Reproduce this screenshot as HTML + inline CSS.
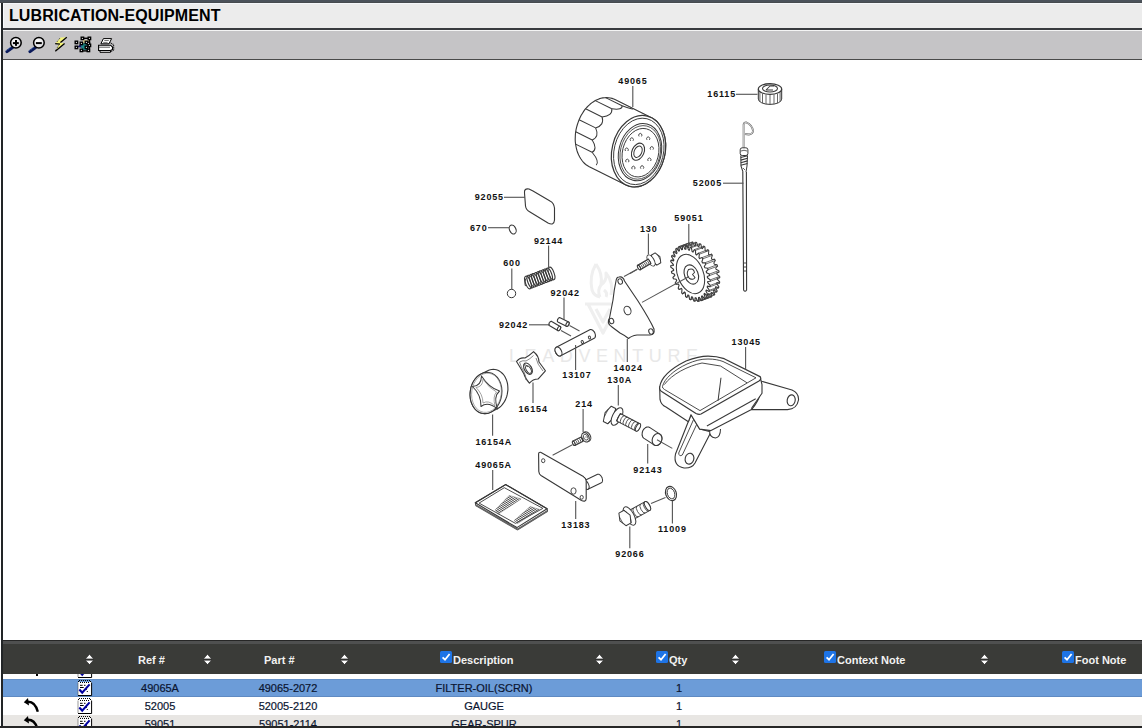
<!DOCTYPE html>
<html><head><meta charset="utf-8">
<style>
*{margin:0;padding:0;box-sizing:border-box}
html,body{width:1142px;height:728px;overflow:hidden;background:#fff;font-family:"Liberation Sans",sans-serif;position:relative}
.abs{position:absolute}
#topbar{left:0;top:0;width:1142px;height:3px;background:linear-gradient(#4b525a 0,#4b525a 2px,#474b4f 2px)}
#lborder{left:1px;top:3px;width:2px;height:725px;background:#222527}
#title{left:3px;top:3px;width:1139px;height:25px;background:#ececec;border-top:1px solid #f5f7fa;border-left:1px solid #f8f9fb}
#title span{position:absolute;left:5px;top:3px;font-size:16px;font-weight:bold;color:#000;letter-spacing:0.1px}
#tline{left:3px;top:28px;width:1139px;height:2px;background:#393b3f}
#twhite{left:3px;top:30px;width:1139px;height:1px;background:#f4f4f4}
#toolbar{left:3px;top:31px;width:1139px;height:28px;background:#c5c4c6}
#bline{left:3px;top:59px;width:1139px;height:1px;background:#4a4a4a}
#thead{left:3px;top:640px;width:1139px;height:34px;background:#3a3b38}
#thead .l1{position:absolute;left:0;top:0;width:100%;height:1px;background:#262626}
#thead .l2{position:absolute;left:0;top:1px;width:100%;height:3px;background:#4f5050}
.th{position:absolute;top:653.5px;font-size:11px;font-weight:bold;color:#f2f2f2;white-space:nowrap}
.sort{position:absolute;top:655px;width:8px;height:10px}
.row{left:3px;width:1139px;height:18px}
.td{position:absolute;font-size:11px;color:#0b1530;-webkit-text-stroke:0.2px #0b1530;white-space:nowrap}
#bottom{left:0;top:726px;width:1142px;height:2px;background:#262626}
.cb{position:absolute;top:651px;width:12px;height:12px;background:#1a73e8;border-radius:2px}
#diag{position:absolute;left:0;top:0}
.lb{font-family:"Liberation Sans",sans-serif;font-size:9px;font-weight:bold;letter-spacing:0.85px;fill:#111}
</style></head><body>
<div class="abs" id="title"><span>LUBRICATION-EQUIPMENT</span></div>
<div class="abs" id="tline"></div>
<div class="abs" id="twhite"></div>
<div class="abs" id="toolbar"></div>
<div class="abs" id="bline"></div>
<svg class="abs" style="left:0;top:31px" width="130" height="28" viewBox="0 31 130 28">
<defs><radialGradient id="lens" cx="0.4" cy="0.35" r="0.7"><stop offset="0" stop-color="#fff"/><stop offset="1" stop-color="#d8d8dc"/></radialGradient></defs>
<g>
<line x1="7" y1="51.5" x2="12.5" y2="47.5" stroke="#0a1a5a" stroke-width="3.2" stroke-linecap="round"/>
<line x1="6.5" y1="50.5" x2="11.5" y2="46.5" stroke="#6fa0e8" stroke-width="0.8" stroke-dasharray="1,1"/>
<circle cx="15.9" cy="42.8" r="5.3" fill="url(#lens)" stroke="#000" stroke-width="1.5"/>
<rect x="12.9" y="42.1" width="5.9" height="2" fill="#000"/><rect x="15" y="40" width="2" height="5.8" fill="#000"/>
</g>
<g>
<line x1="30" y1="51.5" x2="35.5" y2="47.5" stroke="#0a1a5a" stroke-width="3.2" stroke-linecap="round"/>
<line x1="29.5" y1="50.5" x2="34.5" y2="46.5" stroke="#6fa0e8" stroke-width="0.8" stroke-dasharray="1,1"/>
<circle cx="38.9" cy="42.8" r="5.3" fill="url(#lens)" stroke="#000" stroke-width="1.5"/>
<rect x="35.9" y="42.1" width="5.9" height="2" fill="#000"/>
</g>
<g>
<path d="M60.5,37.5 L66.8,37.3 L60.6,42.6 L64.6,43.4 L55.3,51.3 L58.8,44.8 L55.3,43.6 Z" fill="#f4f47a"/>
<path d="M66.8,37.3 L60.4,42.6 M55.2,43.6 L60,44.1 M64.6,43.5 L55.3,51.3" stroke="#000" stroke-width="1.3" fill="none"/>
<path d="M60,38 L56.5,42.5 M58.5,45.5 L56,50" stroke="#222" stroke-width="0.8" stroke-dasharray="1,1" fill="none"/>
</g>
<g>
<path d="M83,40 L89,40 L89,44 L83,44 Z" fill="#f2eaa8"/>
<path d="M77,47 L82,43 L83,48 Z" fill="#1a1a6a"/>
<circle cx="84.8" cy="46.6" r="3.6" fill="#1f8a88"/>
<g fill="#000">
<rect x="80.5" y="36.5" width="3.8" height="3.8"/><rect x="87.5" y="36.5" width="3.8" height="3.8"/><rect x="74.5" y="40.5" width="3.8" height="3.8"/><rect x="74.5" y="45.5" width="3.8" height="3.8"/>
<rect x="79.5" y="48.5" width="3.8" height="3.8"/><rect x="86.5" y="48.5" width="3.8" height="3.8"/><rect x="87.5" y="43.5" width="3.8" height="3.8"/><rect x="79.5" y="41.5" width="3.8" height="3.8"/>
<rect x="84.5" y="40.5" width="3.8" height="3.8"/><rect x="86.5" y="41.5" width="3.8" height="3.8"/><rect x="84.5" y="45.5" width="3.8" height="3.8"/>
<rect x="82" y="37.6" width="7" height="1.4"/><rect x="88.7" y="40" width="1.4" height="9"/><rect x="81" y="50.2" width="7" height="1.4"/>
</g>
<g fill="#fff">
<rect x="81.9" y="37.9" width="1" height="1"/><rect x="88.9" y="37.9" width="1" height="1"/><rect x="75.9" y="41.9" width="1" height="1"/><rect x="75.9" y="46.9" width="1" height="1"/>
<rect x="80.9" y="49.9" width="1" height="1"/><rect x="87.9" y="49.9" width="1" height="1"/><rect x="88.9" y="44.9" width="1" height="1"/><rect x="80.9" y="42.9" width="1" height="1"/>
<rect x="85.9" y="41.9" width="1" height="1"/><rect x="87.9" y="42.9" width="1" height="1"/><rect x="85.9" y="46.9" width="1" height="1"/>
</g>
</g>
<g>
<path d="M103.4,38.6 L111.6,38.6 L109,43.8 L100.9,43.8 Z" fill="#fff" stroke="#000" stroke-width="1"/>
<path d="M104.3,40.5 L108.8,40.5 M103.2,42.4 L107.6,42.4" stroke="#555" stroke-width="0.8"/>
<path d="M98.6,45.2 L110.5,45.2 L112.5,47 L112.5,49.5 L110.5,50.5 L98.6,50.5 Z" fill="#fff" stroke="#000" stroke-width="1.1"/>
<path d="M98.8,47.2 L110,47.2" stroke="#333" stroke-width="0.8"/>
<path d="M100,50.5 L110.5,50.5 L110.5,52.3 L100,52.3 Z" fill="#eee" stroke="#000" stroke-width="1"/>
<path d="M109.5,42.5 L113.5,44.5 L113.8,50 L111,51.5" stroke="#111" stroke-width="1.2" stroke-dasharray="1,0.7" fill="none"/>
</g>
</svg>

<svg id="diag" width="1142" height="728" viewBox="0 0 1142 728"><g fill="none" stroke="#efefef" stroke-width="3" stroke-linejoin="round"><text x="509" y="362" textLength="189" lengthAdjust="spacing" style="font-family:Liberation Sans,sans-serif;font-size:18px;fill:#e8e8e8;stroke:none">LEADVENTURE</text><path d="M596,264 Q603,274 601,285 Q607,281 606,273 Q614,283 611,295 M596,264 Q589,276 592,290 Q594,296 600,297 M601,285 Q597,290 600,297 M604,290 Q608,293 606,297"/><path d="M585,304 L621,304 M588,304 L603,333 L618,304 M596,309 L603,322 L610,309" stroke-width="3.2"/></g><path d="M575.2,139.3 L575.3,136.8 L575.4,134.3 L575.7,131.8 L576.1,129.4 L576.7,126.9 L577.4,124.5 L578.2,122.1 L579.1,119.7 L580.1,117.5 L581.2,115.3 L582.5,113.2 L583.8,111.1 L585.2,109.2 L586.7,107.5 L588.3,105.8 L590.0,104.3 L591.7,102.9 L593.5,101.7 L595.3,100.6 L597.1,99.7 L599.0,98.9 L600.9,98.3 L602.8,97.9 L604.7,97.7 L606.6,97.6 L608.4,97.7 L610.3,98.0 L612.0,98.4 L613.8,99.0 L615.5,99.8 L651.6,117.7 L653.2,118.7 L654.8,119.8 L656.3,121.0 L657.6,122.4 L658.9,124.0 L660.1,125.7 L661.2,127.5 L662.2,129.4 L663.1,131.4 L663.8,133.5 L664.5,135.7 L664.9,138.0 L665.3,140.4 L665.6,142.8 L665.7,145.2 L665.6,147.7 L665.5,150.2 L665.2,152.7 L664.8,155.1 L664.2,157.6 L663.5,160.0 L662.7,162.4 L661.8,164.8 L660.8,167.0 L659.7,169.2 L658.4,171.3 L657.1,173.4 L655.7,175.2 L654.2,177.0 L652.6,178.7 L650.9,180.2 L649.2,181.6 L647.4,182.8 L645.6,183.9 L643.8,184.8 L641.9,185.6 L640.0,186.2 L638.1,186.6 L636.2,186.8 L634.3,186.9 L632.5,186.8 L630.6,186.5 L628.9,186.1 L627.1,185.5 L625.4,184.7 L589.3,166.8 L587.7,165.8 L586.1,164.7 L584.6,163.5 L583.3,162.1 L582.0,160.5 L580.8,158.8 L579.7,157.0 L578.7,155.1 L577.8,153.1 L577.1,151.0 L576.5,148.8 L576.0,146.5 L575.6,144.1 L575.3,141.7Z" fill="#fff" stroke="#383838" stroke-width="1.12" stroke-linejoin="round" /><path d="M605.6,97.6 L622.1,105.8" fill="none" stroke="#383838" stroke-width="1.01" stroke-linejoin="round" /><path d="M595.3,100.6 L611.8,108.8" fill="none" stroke="#383838" stroke-width="1.01" stroke-linejoin="round" /><path d="M585.6,108.8 L602.1,117.0" fill="none" stroke="#383838" stroke-width="1.01" stroke-linejoin="round" /><path d="M579.1,119.7 L595.6,127.9" fill="none" stroke="#383838" stroke-width="1.01" stroke-linejoin="round" /><path d="M575.7,131.8 L592.2,140.0" fill="none" stroke="#383838" stroke-width="1.01" stroke-linejoin="round" /><path d="M575.6,144.1 L592.1,152.3" fill="none" stroke="#383838" stroke-width="1.01" stroke-linejoin="round" /><path d="M632.8,108.5 Q633.2,110.0 622.1,105.8" fill="none" stroke="#383838" stroke-width="1.01" stroke-linejoin="round" /><path d="M622.1,105.8 Q622.7,110.2 611.8,108.8" fill="none" stroke="#383838" stroke-width="1.01" stroke-linejoin="round" /><path d="M611.8,108.8 Q612.7,115.8 602.1,117.0" fill="none" stroke="#383838" stroke-width="1.01" stroke-linejoin="round" /><path d="M602.1,117.0 Q604.6,125.3 595.6,127.9" fill="none" stroke="#383838" stroke-width="1.01" stroke-linejoin="round" /><path d="M595.6,127.9 Q599.7,136.9 592.2,140.0" fill="none" stroke="#383838" stroke-width="1.01" stroke-linejoin="round" /><path d="M592.2,140.0 Q597.9,149.1 592.1,152.3" fill="none" stroke="#383838" stroke-width="1.01" stroke-linejoin="round" /><path d="M592.1,152.3 Q599.9,161.7 596.2,165.2" fill="none" stroke="#383838" stroke-width="1.01" stroke-linejoin="round" /><ellipse cx="638.5" cy="151.2" rx="26.5" ry="36.2" transform="rotate(14 638.5 151.2)" fill="#fff" stroke="#383838" stroke-width="1.23"/><ellipse cx="638.8" cy="151.39999999999998" rx="24.645" ry="33.666000000000004" transform="rotate(14 638.8 151.39999999999998)" fill="none" stroke="#383838" stroke-width="0.9"/><ellipse cx="640.0" cy="152.2" rx="21.200000000000003" ry="28.960000000000004" transform="rotate(14 640.0 152.2)" fill="none" stroke="#383838" stroke-width="1.01"/><ellipse cx="640.3" cy="152.39999999999998" rx="19.875" ry="27.150000000000002" transform="rotate(14 640.3 152.39999999999998)" fill="none" stroke="#383838" stroke-width="0.78"/><ellipse cx="640.5" cy="152.7" rx="18.02" ry="24.616000000000003" transform="rotate(14 640.5 152.7)" fill="none" stroke="#383838" stroke-width="0.9"/><ellipse cx="638.0" cy="151.7" rx="6.0" ry="9.0" transform="rotate(24 638.0 151.7)" fill="none" stroke="#383838" stroke-width="1.12"/><ellipse cx="638.0" cy="151.7" rx="3.8" ry="6.0" transform="rotate(24 638.0 151.7)" fill="none" stroke="#383838" stroke-width="1.01"/><path d="M648.2,161.0 a1.6,1.8 0 1 1 2.4,0" fill="none" stroke="#383838" stroke-width="0.9"/><path d="M640.9,168.7 a1.6,1.8 0 1 1 2.4,0" fill="none" stroke="#383838" stroke-width="0.9"/><path d="M632.2,169.2 a1.6,1.8 0 1 1 2.4,0" fill="none" stroke="#383838" stroke-width="0.9"/><path d="M626.1,162.2 a1.6,1.8 0 1 1 2.4,0" fill="none" stroke="#383838" stroke-width="0.9"/><path d="M625.5,151.0 a1.6,1.8 0 1 1 2.4,0" fill="none" stroke="#383838" stroke-width="0.9"/><path d="M630.6,140.8 a1.6,1.8 0 1 1 2.4,0" fill="none" stroke="#383838" stroke-width="0.9"/><path d="M639.1,136.4 a1.6,1.8 0 1 1 2.4,0" fill="none" stroke="#383838" stroke-width="0.9"/><path d="M647.0,139.9 a1.6,1.8 0 1 1 2.4,0" fill="none" stroke="#383838" stroke-width="0.9"/><path d="M650.6,149.6 a1.6,1.8 0 1 1 2.4,0" fill="none" stroke="#383838" stroke-width="0.9"/><path d="M758.3,89 L758.3,99 A11.7,5.4 0 0 0 781.7,99 L781.7,89" fill="#fff" stroke="#383838" stroke-width="1"/><line x1="758.5" y1="90.4" x2="758.5" y2="99.9" stroke="#555" stroke-width="0.9"/><line x1="759.9" y1="92.2" x2="759.9" y2="101.7" stroke="#555" stroke-width="0.9"/><line x1="762.5" y1="93.6" x2="762.5" y2="103.1" stroke="#555" stroke-width="0.9"/><line x1="766.0" y1="94.6" x2="766.0" y2="104.1" stroke="#555" stroke-width="0.9"/><line x1="770.0" y1="94.9" x2="770.0" y2="104.4" stroke="#555" stroke-width="0.9"/><line x1="774.0" y1="94.6" x2="774.0" y2="104.1" stroke="#555" stroke-width="0.9"/><line x1="777.5" y1="93.6" x2="777.5" y2="103.1" stroke="#555" stroke-width="0.9"/><line x1="780.1" y1="92.2" x2="780.1" y2="101.7" stroke="#555" stroke-width="0.9"/><line x1="781.5" y1="90.4" x2="781.5" y2="99.9" stroke="#555" stroke-width="0.9"/><ellipse cx="770" cy="89" rx="11.7" ry="5.4" transform="rotate(0 770 89)" fill="#fff" stroke="#383838" stroke-width="1.12"/><ellipse cx="770" cy="88.5" rx="7.5" ry="3.6" transform="rotate(0 770 88.5)" fill="none" stroke="#383838" stroke-width="1.01"/><path d="M766,90 L770,86 L774,86 M766,90 L773,90" fill="none" stroke="#383838" stroke-width="1.01" stroke-linejoin="round" /><path d="M743.6,148 L743.6,124.5 Q744,122 746.5,122.5 Q752,125 753,130.5 Q753,134 749,134.5 L745,134" fill="none" stroke="#666" stroke-width="1.79" stroke-linejoin="round" /><path d="M743.6,148 L743.6,124.5 Q744,122 746.5,122.5 Q752,125 753,130.5 Q753,134 749,134.5 L745,134" fill="none" stroke="#fff" stroke-width="0.67" stroke-linejoin="round" /><rect x="740.2" y="147.8" width="7.7" height="7.7" rx="2" fill="#fff" stroke="#383838" stroke-width="1"/><path d="M741,151 Q744,149.5 747,151" fill="none" stroke="#383838" stroke-width="0.78" stroke-linejoin="round" /><path d="M740.8,157.5 L747.5,155.7" fill="none" stroke="#383838" stroke-width="1.12" stroke-linejoin="round" /><path d="M740.8,160.1 L747.5,158.3" fill="none" stroke="#383838" stroke-width="1.12" stroke-linejoin="round" /><path d="M740.8,162.7 L747.5,160.9" fill="none" stroke="#383838" stroke-width="1.12" stroke-linejoin="round" /><path d="M740.8,165.3 L747.5,163.5" fill="none" stroke="#383838" stroke-width="1.12" stroke-linejoin="round" /><path d="M740.8,155.5 L741,166 L743,172 M747.5,155.5 L747,166 L746,172" fill="none" stroke="#383838" stroke-width="1.01" stroke-linejoin="round" /><path d="M743,168 L745,170" fill="none" stroke="#383838" stroke-width="0.78" stroke-linejoin="round" /><path d="M742.8,172 L743.6,290 Q745,292.5 746.6,290 L746.4,172" fill="#fff" stroke="#383838" stroke-width="1.12" stroke-linejoin="round" /><path d="M744,263 L746,263 M744,267 L746,267 M744,271 L746,271" fill="none" stroke="#383838" stroke-width="0.9" stroke-linejoin="round" /><path d="M529,189 Q524,188 524.5,193 L525.5,206 Q526,210 530,212 L548,223 Q554,226 554.5,220 L554.5,208 Q554,203 550,201 L533,191 Z" fill="#fff" stroke="#383838" stroke-width="1.12" stroke-linejoin="round" /><ellipse cx="512.7" cy="229.5" rx="3.2" ry="4.6" transform="rotate(-25 512.7 229.5)" fill="none" stroke="#383838" stroke-width="1.12"/><circle cx="511.5" cy="293.5" r="4.2" fill="#fff" stroke="#383838" stroke-width="1"/><ellipse cx="528.0" cy="282.5" rx="2.6" ry="6.6" transform="rotate(-20 528.0 282.5)" fill="none" stroke="#383838" stroke-width="1.12"/><ellipse cx="530.4" cy="281.6" rx="2.6" ry="6.6" transform="rotate(-20 530.4 281.6)" fill="none" stroke="#383838" stroke-width="1.12"/><ellipse cx="532.7" cy="280.7" rx="2.6" ry="6.6" transform="rotate(-20 532.7 280.7)" fill="none" stroke="#383838" stroke-width="1.12"/><ellipse cx="535.0" cy="279.8" rx="2.6" ry="6.6" transform="rotate(-20 535.0 279.8)" fill="none" stroke="#383838" stroke-width="1.12"/><ellipse cx="537.4" cy="278.9" rx="2.6" ry="6.6" transform="rotate(-20 537.4 278.9)" fill="none" stroke="#383838" stroke-width="1.12"/><ellipse cx="539.8" cy="278.0" rx="2.6" ry="6.6" transform="rotate(-20 539.8 278.0)" fill="none" stroke="#383838" stroke-width="1.12"/><ellipse cx="542.1" cy="277.1" rx="2.6" ry="6.6" transform="rotate(-20 542.1 277.1)" fill="none" stroke="#383838" stroke-width="1.12"/><ellipse cx="544.5" cy="276.2" rx="2.6" ry="6.6" transform="rotate(-20 544.5 276.2)" fill="none" stroke="#383838" stroke-width="1.12"/><ellipse cx="546.8" cy="275.3" rx="2.6" ry="6.6" transform="rotate(-20 546.8 275.3)" fill="none" stroke="#383838" stroke-width="1.12"/><ellipse cx="549.1" cy="274.4" rx="2.6" ry="6.6" transform="rotate(-20 549.1 274.4)" fill="none" stroke="#383838" stroke-width="1.12"/><ellipse cx="551.5" cy="273.5" rx="2.6" ry="6.6" transform="rotate(-20 551.5 273.5)" fill="none" stroke="#383838" stroke-width="1.12"/><path d="M525.5,286 Q524,281 526.5,278" fill="none" stroke="#383838" stroke-width="1.01" stroke-linejoin="round" /><path d="M557.4,320.9 L557.4,320.7 L557.4,320.5 L557.4,320.3 L557.5,320.1 L557.6,319.8 L557.6,319.6 L557.7,319.4 L557.8,319.2 L557.9,319.0 L558.1,318.8 L558.2,318.6 L558.3,318.4 L558.5,318.3 L558.6,318.1 L558.8,318.0 L559.0,317.9 L559.1,317.8 L559.3,317.7 L559.4,317.6 L559.6,317.6 L559.7,317.6 L559.9,317.6 L560.0,317.6 L560.1,317.7 L568.6,322.1 L568.7,322.1 L568.8,322.2 L568.9,322.3 L569.0,322.5 L569.0,322.6 L569.1,322.8 L569.1,322.9 L569.1,323.1 L569.1,323.3 L569.1,323.5 L569.1,323.7 L569.0,323.9 L568.9,324.2 L568.9,324.4 L568.8,324.6 L568.7,324.8 L568.6,325.0 L568.4,325.2 L568.3,325.4 L568.2,325.6 L568.0,325.7 L567.9,325.9 L567.7,326.0 L567.5,326.1 L567.4,326.2 L567.2,326.3 L567.1,326.4 L566.9,326.4 L566.8,326.4 L566.6,326.4 L566.5,326.4 L566.4,326.3 L557.9,321.9 L557.8,321.9 L557.7,321.8 L557.6,321.7 L557.5,321.5 L557.5,321.4 L557.4,321.2 L557.4,321.1Z" fill="#fff" stroke="#383838" stroke-width="1.12" stroke-linejoin="round" /><ellipse cx="567.5" cy="324.2" rx="1.32" ry="2.4" transform="rotate(27.368210428888123 567.5 324.2)" fill="#fff" stroke="#383838" stroke-width="1.12"/><line x1="569.5" y1="325.5" x2="579.5" y2="331" stroke="#555" stroke-width="1.01"/><path d="M548.8,324.5 L548.8,324.3 L548.9,324.1 L548.9,323.9 L549.0,323.7 L549.1,323.5 L549.1,323.2 L549.2,323.0 L549.4,322.8 L549.5,322.6 L549.6,322.4 L549.8,322.3 L549.9,322.1 L550.1,321.9 L550.2,321.8 L550.4,321.7 L550.6,321.6 L550.7,321.5 L550.9,321.4 L551.0,321.4 L551.2,321.3 L551.3,321.3 L551.5,321.3 L551.6,321.4 L551.7,321.4 L560.2,326.4 L560.3,326.5 L560.4,326.6 L560.5,326.7 L560.6,326.8 L560.6,327.0 L560.6,327.2 L560.7,327.3 L560.7,327.5 L560.7,327.7 L560.6,327.9 L560.6,328.1 L560.5,328.3 L560.4,328.5 L560.4,328.8 L560.3,329.0 L560.1,329.2 L560.0,329.4 L559.9,329.6 L559.7,329.7 L559.6,329.9 L559.4,330.1 L559.3,330.2 L559.1,330.3 L558.9,330.4 L558.8,330.5 L558.6,330.6 L558.5,330.6 L558.3,330.7 L558.2,330.7 L558.0,330.7 L557.9,330.6 L557.8,330.6 L549.3,325.6 L549.2,325.5 L549.1,325.4 L549.0,325.3 L548.9,325.2 L548.9,325.0 L548.9,324.8 L548.8,324.7Z" fill="#fff" stroke="#383838" stroke-width="1.12" stroke-linejoin="round" /><ellipse cx="559" cy="328.5" rx="1.32" ry="2.4" transform="rotate(30.46554491945988 559 328.5)" fill="#fff" stroke="#383838" stroke-width="1.12"/><line x1="561" y1="330.5" x2="571" y2="336" stroke="#555" stroke-width="1.01"/><path d="M555.1,349.8 L555.1,349.4 L555.1,349.1 L555.2,348.7 L555.3,348.4 L555.5,348.1 L555.6,347.8 L555.8,347.6 L556.1,347.4 L556.3,347.2 L589.8,329.7 L590.1,329.6 L590.4,329.5 L590.7,329.5 L591.0,329.5 L591.3,329.6 L591.7,329.7 L592.0,329.8 L592.3,330.0 L592.7,330.2 L593.0,330.5 L593.3,330.8 L593.6,331.1 L593.9,331.5 L594.2,331.8 L594.4,332.2 L594.7,332.6 L594.9,333.1 L595.0,333.5 L595.2,333.9 L595.3,334.4 L595.4,334.8 L595.4,335.2 L595.4,335.7 L595.4,336.1 L595.4,336.4 L595.3,336.8 L595.2,337.1 L595.0,337.4 L594.9,337.7 L594.7,337.9 L594.4,338.1 L594.2,338.3 L560.7,355.8 L560.4,355.9 L560.1,356.0 L559.8,356.0 L559.5,356.0 L559.2,355.9 L558.8,355.8 L558.5,355.7 L558.2,355.5 L557.8,355.3 L557.5,355.0 L557.2,354.7 L556.9,354.4 L556.6,354.0 L556.3,353.7 L556.1,353.3 L555.8,352.9 L555.6,352.4 L555.5,352.0 L555.3,351.6 L555.2,351.1 L555.1,350.7 L555.1,350.3Z" fill="#fff" stroke="#383838" stroke-width="1.12" stroke-linejoin="round" /><ellipse cx="558.5" cy="351.5" rx="3.0" ry="4.8" transform="rotate(-27 558.5 351.5)" fill="#fff" stroke="#383838" stroke-width="1.12"/><ellipse cx="582.3" cy="342" rx="1.1" ry="1.5" transform="rotate(-27 582.3 342)" fill="none" stroke="#383838" stroke-width="0.9"/><ellipse cx="589.5" cy="337.5" rx="1.1" ry="1.5" transform="rotate(-27 589.5 337.5)" fill="none" stroke="#383838" stroke-width="0.9"/><path d="M516.5,361.5 Q520,357 525,358 Q529,356 533.6,351.7 Q539,356 539,362 Q542,366 545.4,370.8 Q540,377 538,379 Q533,379 529.4,383.1 Q525,378 524,374 Q520,367 516.5,361.5 Z" fill="#fff" stroke="#383838" stroke-width="1.12" stroke-linejoin="round" /><path d="M519.5,362 Q523,360 526,361 Q530,359 533.5,355.5 M536,358 Q537,364 543,371 M526,380 Q526,376 524,372 Q521,367 519.5,362" fill="none" stroke="#666" stroke-width="0.78" stroke-linejoin="round" /><ellipse cx="528" cy="368.7" rx="3.6" ry="6.2" transform="rotate(-30 528 368.7)" fill="#fff" stroke="#383838" stroke-width="1.12"/><ellipse cx="528.5" cy="369.5" rx="2.2" ry="4.2" transform="rotate(-30 528.5 369.5)" fill="none" stroke="#383838" stroke-width="0.9"/><path d="M523.5,365 Q526,364 528,367" fill="none" stroke="#383838" stroke-width="0.78" stroke-linejoin="round" /><path d="M470.1,394.8 L470.1,392.8 L470.4,390.8 L470.7,388.8 L471.2,386.8 L471.9,384.9 L472.6,383.1 L473.6,381.4 L474.6,379.8 L475.7,378.3 L477.0,376.9 L478.3,375.8 L479.7,374.7 L481.2,373.9 L487.2,370.9 L488.7,370.2 L490.2,369.7 L491.8,369.5 L493.3,369.4 L494.9,369.5 L496.4,369.8 L497.9,370.3 L499.3,371.0 L500.6,371.9 L501.9,373.0 L503.1,374.2 L504.2,375.5 L505.1,377.1 L505.9,378.7 L506.6,380.4 L507.2,382.3 L507.6,384.2 L507.8,386.2 L507.9,388.2 L507.9,390.2 L507.6,392.2 L507.3,394.2 L506.8,396.2 L506.1,398.1 L505.4,399.9 L504.4,401.6 L503.4,403.2 L502.3,404.7 L501.0,406.1 L499.7,407.2 L498.3,408.3 L496.8,409.1 L490.8,412.1 L489.3,412.8 L487.8,413.3 L486.2,413.5 L484.7,413.6 L483.1,413.5 L481.6,413.2 L480.1,412.7 L478.7,412.0 L477.4,411.1 L476.1,410.0 L474.9,408.8 L473.8,407.5 L472.9,405.9 L472.1,404.3 L471.4,402.6 L470.8,400.7 L470.4,398.8 L470.2,396.8Z" fill="#fff" stroke="#383838" stroke-width="1.12" stroke-linejoin="round" /><ellipse cx="486" cy="393" rx="15.8" ry="20.7" transform="rotate(8 486 393)" fill="#fff" stroke="#383838" stroke-width="1.12"/><ellipse cx="486.5" cy="392.8" rx="14.8" ry="19.7" transform="rotate(8 486.5 392.8)" fill="none" stroke="#888" stroke-width="0.67"/><path d="M481.5,376 Q481.3,386.3 472.5,386.5 Q481.1,394.7 481,406.5 Q488.0,400.9 497.5,409 Q493.1,396.6 499.5,391 Q488.7,387.6 481.5,376Z" fill="none" stroke="#383838" stroke-width="1.01" stroke-linejoin="round" /><path d="M483,379 Q482.9,386.9 476,387.5 Q482.9,394.1 483,403 Q488.6,399.7 495,406 Q492.6,396.4 496.5,392 Q489.0,388.3 483,379Z" fill="none" stroke="#777" stroke-width="0.67" stroke-linejoin="round" /><path d="M619,277 Q623,276 624.5,281 L638,301 Q650,320 654,329 Q655,335 650,335 L637,335 Q631,336 628.5,338.5 Q626,336 620,333 L612,327 Q606,323 609.5,318 L613,300 Q614,290 616,281 Q616.5,277 619,277 Z" fill="#fff" stroke="#383838" stroke-width="1.12" stroke-linejoin="round" /><ellipse cx="620.2" cy="281.5" rx="2.2" ry="2.8" transform="rotate(-20 620.2 281.5)" fill="none" stroke="#383838" stroke-width="1.01"/><ellipse cx="611.5" cy="321" rx="2.2" ry="2.8" transform="rotate(-20 611.5 321)" fill="none" stroke="#383838" stroke-width="1.01"/><ellipse cx="651" cy="331.5" rx="2.2" ry="2.8" transform="rotate(-20 651 331.5)" fill="none" stroke="#383838" stroke-width="1.01"/><ellipse cx="627.5" cy="310.5" rx="3.4" ry="4.4" transform="rotate(-20 627.5 310.5)" fill="none" stroke="#383838" stroke-width="1.01"/><line x1="624" y1="276.5" x2="637" y2="269.5" stroke="#555" stroke-width="1.01"/><path d="M652.1,261.3 L651.2,255.2 L655.1,252.9 L659.9,256.7 L660.8,262.8 L656.9,265.1Z" fill="#fff" stroke="#383838" stroke-width="1.01" stroke-linejoin="round" /><path d="M651.2,255.2 L651.6,258.2 M656.9,265.1 L654.5,263.2" fill="none" stroke="#383838" stroke-width="0.81" stroke-linejoin="round" /><path d="M657.5,254.8 L660.4,259.8" fill="none" stroke="#383838" stroke-width="0.71" stroke-linejoin="round" /><ellipse cx="651" cy="260.5" rx="3.0" ry="6.2" transform="rotate(149.7 651 260.5)" fill="#fff" stroke="#383838" stroke-width="1.01"/><path d="M648.4,259.0 L637.7,265.3 A1.2,2.6 150 0 0 640.3,269.7 L651.0,263.5 Z" fill="#fff" stroke="#383838" stroke-width="1.01" stroke-linejoin="round" /><ellipse cx="639" cy="267.5" rx="1.2" ry="2.6" transform="rotate(149.7 639 267.5)" fill="#fff" stroke="#383838" stroke-width="1.01"/><path d="M647.6,259.5 A1.2,2.6 150 0 1 650.2,264.0" fill="none" stroke="#383838" stroke-width="0.86" stroke-linejoin="round" /><path d="M646.0,260.4 A1.2,2.6 150 0 1 648.6,264.9" fill="none" stroke="#383838" stroke-width="0.86" stroke-linejoin="round" /><path d="M644.3,261.4 A1.2,2.6 150 0 1 646.9,265.9" fill="none" stroke="#383838" stroke-width="0.86" stroke-linejoin="round" /><path d="M642.7,262.3 A1.2,2.6 150 0 1 645.3,266.8" fill="none" stroke="#383838" stroke-width="0.86" stroke-linejoin="round" /><path d="M641.1,263.3 A1.2,2.6 150 0 1 643.7,267.8" fill="none" stroke="#383838" stroke-width="0.86" stroke-linejoin="round" /><path d="M639.4,264.2 A1.2,2.6 150 0 1 642.1,268.7" fill="none" stroke="#383838" stroke-width="0.86" stroke-linejoin="round" /><path d="M637.8,265.2 A1.2,2.6 150 0 1 640.4,269.7" fill="none" stroke="#383838" stroke-width="0.86" stroke-linejoin="round" /><line x1="630" y1="273.5" x2="637.5" y2="269" stroke="#555" stroke-width="1.01"/><path d="M714.4,264.2 L717.1,264.8 L717.6,266.2 L715.7,268.0 L716.0,269.2 L718.8,270.6 L719.1,272.0 L716.8,273.0 L717.0,274.3 L719.7,276.4 L719.8,277.8 L717.2,278.0 L717.2,279.2 L719.7,281.9 L719.6,283.2 L716.9,282.6 L716.7,283.6 L718.9,286.8 L718.6,288.0 L715.8,286.6 L715.4,287.5 L717.2,291.1 L716.7,292.0 L714.0,289.9 L713.5,290.6 L714.8,294.4 L714.1,295.1 L711.6,292.4 L711.0,292.8 L711.8,296.7 L710.9,297.1 L708.8,293.8 L708.0,294.0 L708.2,297.8 L707.3,297.9 L705.5,294.3 L704.6,294.2 L704.3,297.7 L703.3,297.4 L702.0,293.6 L701.1,293.3 L700.2,296.3 L699.1,295.8 L698.4,292.0 L697.5,291.4 L696.1,293.9 L695.1,293.1 L694.8,289.3 L694.0,288.5 L692.1,290.3 L691.2,289.3 L691.5,285.9 L690.8,284.9 L688.5,285.9 L687.7,284.7 L688.6,281.7 L687.9,280.6 L685.4,280.8 L684.7,279.5 L686.2,277.0 L685.6,275.8 L682.9,275.2 L682.4,273.8 L684.3,272.0 L684.0,270.8 L681.2,269.4 L680.9,268.0 L683.2,267.0 L683.0,265.7 L680.3,263.6 L680.2,262.2 L682.8,262.0 L682.8,260.8 L680.3,258.1 L680.4,256.8 L683.1,257.4 L683.3,256.4 L681.1,253.2 L681.4,252.0 L684.2,253.4 L684.6,252.5 L682.8,248.9 L683.3,248.0 L686.0,250.1 L686.5,249.4 L685.2,245.6 L685.9,244.9 L688.4,247.6 L689.0,247.2 L688.2,243.3 L689.1,242.9 L691.2,246.2 L692.0,246.0 L691.8,242.2 L692.7,242.1 L694.5,245.7 L695.4,245.8 L695.7,242.3 L696.7,242.6 L698.0,246.4 L698.9,246.7 L699.8,243.7 L700.9,244.2 L701.6,248.0 L702.5,248.6 L703.9,246.1 L704.9,246.9 L705.2,250.7 L706.0,251.5 L707.9,249.7 L708.8,250.7 L708.5,254.1 L709.2,255.1 L711.5,254.1 L712.3,255.3 L711.4,258.3 L712.1,259.4 L714.6,259.2 L715.3,260.5 L713.8,263.0Z" fill="#fff" stroke="#383838" stroke-width="1.01" stroke-linejoin="round" /><line x1="707.6" y1="268.3" x2="717.1" y2="264.8" stroke="#444" stroke-width="0.78"/><line x1="708.1" y1="269.7" x2="717.6" y2="266.2" stroke="#444" stroke-width="0.78"/><line x1="709.3" y1="274.1" x2="718.8" y2="270.6" stroke="#444" stroke-width="0.78"/><line x1="709.6" y1="275.5" x2="719.1" y2="272.0" stroke="#444" stroke-width="0.78"/><line x1="710.2" y1="279.9" x2="719.7" y2="276.4" stroke="#444" stroke-width="0.78"/><line x1="710.3" y1="281.3" x2="719.8" y2="277.8" stroke="#444" stroke-width="0.78"/><line x1="710.2" y1="285.4" x2="719.7" y2="281.9" stroke="#444" stroke-width="0.78"/><line x1="710.1" y1="286.7" x2="719.6" y2="283.2" stroke="#444" stroke-width="0.78"/><line x1="709.4" y1="290.3" x2="718.9" y2="286.8" stroke="#444" stroke-width="0.78"/><line x1="709.1" y1="291.5" x2="718.6" y2="288.0" stroke="#444" stroke-width="0.78"/><line x1="707.7" y1="294.6" x2="717.2" y2="291.1" stroke="#444" stroke-width="0.78"/><line x1="707.2" y1="295.5" x2="716.7" y2="292.0" stroke="#444" stroke-width="0.78"/><line x1="705.3" y1="297.9" x2="714.8" y2="294.4" stroke="#444" stroke-width="0.78"/><line x1="704.6" y1="298.6" x2="714.1" y2="295.1" stroke="#444" stroke-width="0.78"/><line x1="702.3" y1="300.2" x2="711.8" y2="296.7" stroke="#444" stroke-width="0.78"/><line x1="701.4" y1="300.6" x2="710.9" y2="297.1" stroke="#444" stroke-width="0.78"/><line x1="698.7" y1="301.3" x2="708.2" y2="297.8" stroke="#444" stroke-width="0.78"/><line x1="697.8" y1="301.4" x2="707.3" y2="297.9" stroke="#444" stroke-width="0.78"/><line x1="694.8" y1="301.2" x2="704.3" y2="297.7" stroke="#444" stroke-width="0.78"/><line x1="693.8" y1="300.9" x2="703.3" y2="297.4" stroke="#444" stroke-width="0.78"/><line x1="690.7" y1="299.8" x2="700.2" y2="296.3" stroke="#444" stroke-width="0.78"/><line x1="689.6" y1="299.3" x2="699.1" y2="295.8" stroke="#444" stroke-width="0.78"/><line x1="686.6" y1="297.4" x2="696.1" y2="293.9" stroke="#444" stroke-width="0.78"/><line x1="685.6" y1="296.6" x2="695.1" y2="293.1" stroke="#444" stroke-width="0.78"/><line x1="682.6" y1="293.8" x2="692.1" y2="290.3" stroke="#444" stroke-width="0.78"/><line x1="681.7" y1="292.8" x2="691.2" y2="289.3" stroke="#444" stroke-width="0.78"/><line x1="679.0" y1="289.4" x2="688.5" y2="285.9" stroke="#444" stroke-width="0.78"/><line x1="678.2" y1="288.2" x2="687.7" y2="284.7" stroke="#444" stroke-width="0.78"/><line x1="675.9" y1="284.3" x2="685.4" y2="280.8" stroke="#444" stroke-width="0.78"/><line x1="675.2" y1="283.0" x2="684.7" y2="279.5" stroke="#444" stroke-width="0.78"/><line x1="673.4" y1="278.7" x2="682.9" y2="275.2" stroke="#444" stroke-width="0.78"/><line x1="672.9" y1="277.3" x2="682.4" y2="273.8" stroke="#444" stroke-width="0.78"/><line x1="671.7" y1="272.9" x2="681.2" y2="269.4" stroke="#444" stroke-width="0.78"/><line x1="671.4" y1="271.5" x2="680.9" y2="268.0" stroke="#444" stroke-width="0.78"/><line x1="670.8" y1="267.1" x2="680.3" y2="263.6" stroke="#444" stroke-width="0.78"/><line x1="670.7" y1="265.7" x2="680.2" y2="262.2" stroke="#444" stroke-width="0.78"/><line x1="670.8" y1="261.6" x2="680.3" y2="258.1" stroke="#444" stroke-width="0.78"/><line x1="670.9" y1="260.3" x2="680.4" y2="256.8" stroke="#444" stroke-width="0.78"/><line x1="671.6" y1="256.7" x2="681.1" y2="253.2" stroke="#444" stroke-width="0.78"/><line x1="671.9" y1="255.5" x2="681.4" y2="252.0" stroke="#444" stroke-width="0.78"/><line x1="673.3" y1="252.4" x2="682.8" y2="248.9" stroke="#444" stroke-width="0.78"/><line x1="673.8" y1="251.5" x2="683.3" y2="248.0" stroke="#444" stroke-width="0.78"/><line x1="675.7" y1="249.1" x2="685.2" y2="245.6" stroke="#444" stroke-width="0.78"/><line x1="676.4" y1="248.4" x2="685.9" y2="244.9" stroke="#444" stroke-width="0.78"/><line x1="678.7" y1="246.8" x2="688.2" y2="243.3" stroke="#444" stroke-width="0.78"/><line x1="679.6" y1="246.4" x2="689.1" y2="242.9" stroke="#444" stroke-width="0.78"/><line x1="682.3" y1="245.7" x2="691.8" y2="242.2" stroke="#444" stroke-width="0.78"/><line x1="683.2" y1="245.6" x2="692.7" y2="242.1" stroke="#444" stroke-width="0.78"/><line x1="686.2" y1="245.8" x2="695.7" y2="242.3" stroke="#444" stroke-width="0.78"/><line x1="687.2" y1="246.1" x2="696.7" y2="242.6" stroke="#444" stroke-width="0.78"/><line x1="690.3" y1="247.2" x2="699.8" y2="243.7" stroke="#444" stroke-width="0.78"/><line x1="691.4" y1="247.7" x2="700.9" y2="244.2" stroke="#444" stroke-width="0.78"/><line x1="694.4" y1="249.6" x2="703.9" y2="246.1" stroke="#444" stroke-width="0.78"/><line x1="695.4" y1="250.4" x2="704.9" y2="246.9" stroke="#444" stroke-width="0.78"/><line x1="698.4" y1="253.2" x2="707.9" y2="249.7" stroke="#444" stroke-width="0.78"/><line x1="699.3" y1="254.2" x2="708.8" y2="250.7" stroke="#444" stroke-width="0.78"/><line x1="702.0" y1="257.6" x2="711.5" y2="254.1" stroke="#444" stroke-width="0.78"/><line x1="702.8" y1="258.8" x2="712.3" y2="255.3" stroke="#444" stroke-width="0.78"/><line x1="705.1" y1="262.7" x2="714.6" y2="259.2" stroke="#444" stroke-width="0.78"/><line x1="705.8" y1="264.0" x2="715.3" y2="260.5" stroke="#444" stroke-width="0.78"/><path d="M704.9,267.7 L707.6,268.3 L708.1,269.7 L706.2,271.5 L706.5,272.7 L709.3,274.1 L709.6,275.5 L707.3,276.5 L707.5,277.8 L710.2,279.9 L710.3,281.3 L707.7,281.5 L707.7,282.7 L710.2,285.4 L710.1,286.7 L707.4,286.1 L707.2,287.1 L709.4,290.3 L709.1,291.5 L706.3,290.1 L705.9,291.0 L707.7,294.6 L707.2,295.5 L704.5,293.4 L704.0,294.1 L705.3,297.9 L704.6,298.6 L702.1,295.9 L701.5,296.3 L702.3,300.2 L701.4,300.6 L699.3,297.3 L698.5,297.5 L698.7,301.3 L697.8,301.4 L696.0,297.8 L695.1,297.7 L694.8,301.2 L693.8,300.9 L692.5,297.1 L691.6,296.8 L690.7,299.8 L689.6,299.3 L688.9,295.5 L688.0,294.9 L686.6,297.4 L685.6,296.6 L685.3,292.8 L684.5,292.0 L682.6,293.8 L681.7,292.8 L682.0,289.4 L681.3,288.4 L679.0,289.4 L678.2,288.2 L679.1,285.2 L678.4,284.1 L675.9,284.3 L675.2,283.0 L676.7,280.5 L676.1,279.3 L673.4,278.7 L672.9,277.3 L674.8,275.5 L674.5,274.3 L671.7,272.9 L671.4,271.5 L673.7,270.5 L673.5,269.2 L670.8,267.1 L670.7,265.7 L673.3,265.5 L673.3,264.3 L670.8,261.6 L670.9,260.3 L673.6,260.9 L673.8,259.9 L671.6,256.7 L671.9,255.5 L674.7,256.9 L675.1,256.0 L673.3,252.4 L673.8,251.5 L676.5,253.6 L677.0,252.9 L675.7,249.1 L676.4,248.4 L678.9,251.1 L679.5,250.7 L678.7,246.8 L679.6,246.4 L681.7,249.7 L682.5,249.5 L682.3,245.7 L683.2,245.6 L685.0,249.2 L685.9,249.3 L686.2,245.8 L687.2,246.1 L688.5,249.9 L689.4,250.2 L690.3,247.2 L691.4,247.7 L692.1,251.5 L693.0,252.1 L694.4,249.6 L695.4,250.4 L695.7,254.2 L696.5,255.0 L698.4,253.2 L699.3,254.2 L699.0,257.6 L699.7,258.6 L702.0,257.6 L702.8,258.8 L701.9,261.8 L702.6,262.9 L705.1,262.7 L705.8,264.0 L704.3,266.5Z" fill="#fff" stroke="#383838" stroke-width="1.12" stroke-linejoin="round" /><ellipse cx="690.5" cy="274.0" rx="12.8" ry="20.5" transform="rotate(-22 690.5 274.0)" fill="none" stroke="#383838" stroke-width="1.01"/><ellipse cx="691.3" cy="274.5" rx="6.8" ry="10.0" transform="rotate(-22 691.3 274.5)" fill="none" stroke="#383838" stroke-width="1.12"/><path d="M688.5,269.5 Q693.5,267.5 694.5,272.5 L692.5,274.5 L695.0,277.5 Q693.5,280.5 689.5,278.5 Q685.5,274.5 688.5,269.5 Z" fill="none" stroke="#383838" stroke-width="1.01" stroke-linejoin="round" /><line x1="642" y1="302.4" x2="689" y2="276.5" stroke="#555" stroke-width="1.01"/><path d="M760.5,381 L792,390 Q799,393 798.5,400 Q797,409 787.5,409.6 L751.5,409.6 Q758,402 760,394.5 Z" fill="#fff" stroke="#383838" stroke-width="1.12" stroke-linejoin="round" /><ellipse cx="791.2" cy="400.3" rx="4.0" ry="5.5" transform="rotate(10 791.2 400.3)" fill="none" stroke="#383838" stroke-width="1.12"/><path d="M691,414.7 L675.5,454 Q673,466 684,468 Q692,468.5 695,463 L711,432 L700,429 Z" fill="#fff" stroke="#383838" stroke-width="1.12" stroke-linejoin="round" /><path d="M693.8,419 L678.7,453 Q679,457 682.3,455 L698.9,419.7" fill="none" stroke="#383838" stroke-width="0.9" stroke-linejoin="round" /><ellipse cx="689.5" cy="458.7" rx="4.3" ry="5.5" transform="rotate(15 689.5 458.7)" fill="none" stroke="#383838" stroke-width="1.12"/><path d="M709.7,431 Q709,437 715.5,438 Q720.5,437 720.5,429" fill="#fff" stroke="#383838" stroke-width="1.01" stroke-linejoin="round" /><path d="M659.7,387 L660,399.4 Q661,405 666,407 L688.4,421.7 L691,414.7 L699.6,429.1 L711,430.6 L751.5,409.6 L752,407.5 L762,393.3 L762,384.6 L760,376.6 Z" fill="#fff" stroke="#383838" stroke-width="1.12" stroke-linejoin="round" /><path d="M706.9,426 L755.7,398.8" fill="none" stroke="#383838" stroke-width="1.01" stroke-linejoin="round" /><path d="M659.7,387 C661,377 672,368 686,361 C694,358 700,356.2 708,356.2 C714,356.2 719,357 724.2,358.7 L760,376.6 Q762,379 759,381 L701,414 Q699,415 696,413.5 L662.4,392 Q659,390 659.7,387 Z" fill="#fff" stroke="#383838" stroke-width="1.23" stroke-linejoin="round" /><path d="M662.5,386.5 C664,379 674,370 687,364 C695,360.5 701,359 708,359 C714,359 719,360 723,361.5 L756,377.8 L700,410.6 L664.5,389.5 Q662,388 662.5,386.5 Z" fill="none" stroke="#383838" stroke-width="0.9" stroke-linejoin="round" /><path d="M664.3,384.6 C672,374 688,366 702,363 L720.5,366 L747,382.8" fill="none" stroke="#383838" stroke-width="0.9" stroke-linejoin="round" /><path d="M721,377.8 L718,400.7" fill="none" stroke="#383838" stroke-width="1.01" stroke-linejoin="round" /><path d="M613.9,417.3 L607.7,423.8 L603.3,421.5 L605.1,412.7 L611.3,406.2 L615.7,408.5Z" fill="#fff" stroke="#383838" stroke-width="1.01" stroke-linejoin="round" /><path d="M607.7,423.8 L610.8,420.6 M615.7,408.5 L614.8,412.9" fill="none" stroke="#383838" stroke-width="0.81" stroke-linejoin="round" /><path d="M604.2,417.1 L608.2,409.4" fill="none" stroke="#383838" stroke-width="0.71" stroke-linejoin="round" /><ellipse cx="617" cy="416.5" rx="4.5" ry="9.6" transform="rotate(27.4 617 416.5)" fill="#fff" stroke="#383838" stroke-width="1.01"/><path d="M616.4,420.9 L636.1,431.1 A1.9,4.2 27 0 0 639.9,423.7 L620.3,413.5 Z" fill="#fff" stroke="#383838" stroke-width="1.01" stroke-linejoin="round" /><ellipse cx="638" cy="427.4" rx="1.9" ry="4.2" transform="rotate(27.4 638 427.4)" fill="#fff" stroke="#383838" stroke-width="1.01"/><path d="M617.8,421.7 A1.9,4.2 27 0 1 621.7,414.2" fill="none" stroke="#383838" stroke-width="0.86" stroke-linejoin="round" /><path d="M620.7,423.1 A1.9,4.2 27 0 1 624.5,415.7" fill="none" stroke="#383838" stroke-width="0.86" stroke-linejoin="round" /><path d="M623.5,424.6 A1.9,4.2 27 0 1 627.4,417.2" fill="none" stroke="#383838" stroke-width="0.86" stroke-linejoin="round" /><path d="M626.4,426.1 A1.9,4.2 27 0 1 630.2,418.6" fill="none" stroke="#383838" stroke-width="0.86" stroke-linejoin="round" /><path d="M629.2,427.6 A1.9,4.2 27 0 1 633.1,420.1" fill="none" stroke="#383838" stroke-width="0.86" stroke-linejoin="round" /><path d="M632.1,429.1 A1.9,4.2 27 0 1 635.9,421.6" fill="none" stroke="#383838" stroke-width="0.86" stroke-linejoin="round" /><path d="M634.9,430.5 A1.9,4.2 27 0 1 638.8,423.1" fill="none" stroke="#383838" stroke-width="0.86" stroke-linejoin="round" /><path d="M642.1,434.3 L642.1,433.7 L642.2,433.2 L642.3,432.6 L642.4,432.0 L642.6,431.4 L642.8,430.8 L643.1,430.3 L643.4,429.8 L643.7,429.3 L644.1,428.8 L644.5,428.4 L644.9,428.1 L645.4,427.7 L645.8,427.5 L646.3,427.3 L646.8,427.1 L647.3,427.0 L647.7,427.0 L648.2,427.0 L648.7,427.0 L649.1,427.2 L649.5,427.4 L649.9,427.6 L659.9,434.1 L660.3,434.4 L660.6,434.7 L661.0,435.1 L661.2,435.5 L661.4,436.0 L661.6,436.5 L661.8,437.0 L661.9,437.6 L661.9,438.2 L661.9,438.8 L661.8,439.3 L661.7,439.9 L661.6,440.5 L661.4,441.1 L661.2,441.7 L660.9,442.2 L660.6,442.7 L660.3,443.2 L659.9,443.7 L659.5,444.1 L659.1,444.4 L658.6,444.8 L658.2,445.0 L657.7,445.2 L657.2,445.4 L656.7,445.5 L656.3,445.5 L655.8,445.5 L655.3,445.5 L654.9,445.3 L654.5,445.1 L654.1,444.9 L644.1,438.4 L643.7,438.1 L643.4,437.8 L643.0,437.4 L642.8,437.0 L642.6,436.5 L642.4,436.0 L642.2,435.5 L642.1,434.9Z" fill="#fff" stroke="#383838" stroke-width="1.12" stroke-linejoin="round" /><ellipse cx="657" cy="439.5" rx="4.7" ry="6.2" transform="rotate(20 657 439.5)" fill="#fff" stroke="#383838" stroke-width="1.12"/><line x1="657" y1="439.7" x2="672.3" y2="448.4" stroke="#555" stroke-width="1.01"/><ellipse cx="587" cy="436.5" rx="3.4" ry="5.0" transform="rotate(-28 587 436.5)" fill="#fff" stroke="#383838" stroke-width="1.12"/><ellipse cx="585.5" cy="437.3" rx="3.4" ry="5.0" transform="rotate(-28 585.5 437.3)" fill="#fff" stroke="#383838" stroke-width="1.12"/><ellipse cx="585.7" cy="437.2" rx="2.0" ry="3.2" transform="rotate(-28 585.7 437.2)" fill="none" stroke="#383838" stroke-width="0.78"/><path d="M585.9,437.0 L585.9,436.9 L586.0,436.9 L586.1,437.0 L586.1,437.1 L586.0,437.1Z" fill="#fff" stroke="#383838" stroke-width="1.01" stroke-linejoin="round" /><path d="M585.9,436.9 L585.9,437.0 M586.0,437.1 L586.0,437.1" fill="none" stroke="#383838" stroke-width="0.81" stroke-linejoin="round" /><path d="M586.0,436.9 L586.1,437.0" fill="none" stroke="#383838" stroke-width="0.71" stroke-linejoin="round" /><ellipse cx="583.5" cy="438.5" rx="0.1" ry="0.1" transform="rotate(153.7 583.5 438.5)" fill="#fff" stroke="#383838" stroke-width="1.01"/><path d="M581.1,437.0 L572.7,441.1 A1.1,2.4 154 0 0 574.9,445.5 L583.2,441.3 Z" fill="#fff" stroke="#383838" stroke-width="1.01" stroke-linejoin="round" /><ellipse cx="573.8" cy="443.3" rx="1.1" ry="2.4" transform="rotate(153.7 573.8 443.3)" fill="#fff" stroke="#383838" stroke-width="1.01"/><path d="M580.2,437.5 A1.1,2.4 154 0 1 582.3,441.8" fill="none" stroke="#383838" stroke-width="0.86" stroke-linejoin="round" /><path d="M578.3,438.4 A1.1,2.4 154 0 1 580.5,442.7" fill="none" stroke="#383838" stroke-width="0.86" stroke-linejoin="round" /><path d="M576.5,439.3 A1.1,2.4 154 0 1 578.6,443.6" fill="none" stroke="#383838" stroke-width="0.86" stroke-linejoin="round" /><path d="M574.6,440.2 A1.1,2.4 154 0 1 576.8,444.5" fill="none" stroke="#383838" stroke-width="0.86" stroke-linejoin="round" /><path d="M572.8,441.1 A1.1,2.4 154 0 1 574.9,445.4" fill="none" stroke="#383838" stroke-width="0.86" stroke-linejoin="round" /><line x1="572.4" y1="444.8" x2="552.6" y2="455.2" stroke="#555" stroke-width="1.01"/><path d="M582.9,483.2 L583.0,482.8 L583.0,482.5 L583.1,482.1 L583.2,481.8 L583.3,481.6 L583.5,481.3 L583.6,481.1 L583.8,481.0 L584.1,480.8 L597.6,474.3 L597.8,474.2 L598.1,474.2 L598.3,474.2 L598.6,474.2 L598.9,474.3 L599.2,474.4 L599.5,474.6 L599.8,474.8 L600.1,475.0 L600.4,475.3 L600.7,475.6 L600.9,475.9 L601.2,476.2 L601.4,476.6 L601.7,477.0 L601.9,477.4 L602.0,477.8 L602.2,478.2 L602.3,478.7 L602.4,479.1 L602.5,479.5 L602.5,479.9 L602.6,480.3 L602.5,480.7 L602.5,481.0 L602.4,481.4 L602.3,481.7 L602.2,481.9 L602.0,482.2 L601.9,482.4 L601.7,482.5 L601.4,482.7 L587.9,489.2 L587.7,489.3 L587.4,489.3 L587.2,489.3 L586.9,489.3 L586.6,489.2 L586.3,489.1 L586.0,488.9 L585.7,488.7 L585.4,488.5 L585.1,488.2 L584.8,487.9 L584.6,487.6 L584.3,487.3 L584.1,486.9 L583.8,486.5 L583.6,486.1 L583.5,485.7 L583.3,485.3 L583.2,484.8 L583.1,484.4 L583.0,484.0 L583.0,483.6Z" fill="#fff" stroke="#383838" stroke-width="1.01" stroke-linejoin="round" /><ellipse cx="586" cy="485" rx="2.6" ry="4.6" transform="rotate(-25 586 485)" fill="#fff" stroke="#383838" stroke-width="1.01"/><path d="M540.5,452.3 Q538.5,452 538.6,454.5 L538.8,471.5 Q539,474 541,475.5 L581.5,500.5 Q586,502.5 586.2,498.5 L586.2,481 Q586,478.5 583.4,476.6 L541.5,452.8 Z" fill="#fff" stroke="#383838" stroke-width="1.12" stroke-linejoin="round" /><path d="M583.4,476.6 L586.2,479" fill="none" stroke="#383838" stroke-width="0.9" stroke-linejoin="round" /><ellipse cx="543.2" cy="460.7" rx="1.7" ry="2" fill="none" stroke="#383838" stroke-width="0.9"/><ellipse cx="573.5" cy="491" rx="2.6" ry="3.2" fill="none" stroke="#383838" stroke-width="0.9"/><ellipse cx="581.7" cy="497.3" rx="1.6" ry="1.9" fill="none" stroke="#383838" stroke-width="0.9"/><path d="M475.3,502.8 L505.7,484.6 L547.1,508.7 L547.5,511 L517.5,529.5 L475.8,505.2 Z" fill="#fff" stroke="#383838" stroke-width="1.01" stroke-linejoin="round" /><path d="M475.8,505.2 L517.5,529.5 L547.5,511" fill="none" stroke="#666" stroke-width="1.79" stroke-linejoin="round" /><path d="M475.3,502.8 L505.7,484.6 L547.1,508.7 L516.9,527.6 Z" fill="none" stroke="#383838" stroke-width="1.12" stroke-linejoin="round" /><path d="M479.1,503.1 L504.3,487.7 L542.9,508.4 L515.5,523.4 Z" fill="none" stroke="#383838" stroke-width="0.9" stroke-linejoin="round" /><defs><pattern id="mesh" width="1.6" height="1.6" patternUnits="userSpaceOnUse" patternTransform="rotate(-31)"><rect width="1.6" height="0.8" fill="#444"/></pattern></defs><path d="M495.2,509.8 Q503,502 509.2,495.4 L521.1,498.9 L498,514.3 Z" fill="url(#mesh)" stroke="#666" stroke-width="0.45" stroke-linejoin="round" /><path d="M514.1,520.6 Q524,512 530.2,506.6 L539.4,509.4 L517.6,523.4 Z" fill="url(#mesh)" stroke="#666" stroke-width="0.45" stroke-linejoin="round" /><path d="M633.2,519.6 L649.9,510.4 A2.2,5.0 -29 0 0 645.1,501.6 L628.4,510.9 Z" fill="#fff" stroke="#383838" stroke-width="1.01" stroke-linejoin="round" /><ellipse cx="647.5" cy="506" rx="2.2" ry="5.0" transform="rotate(-29.1 647.5 506)" fill="#fff" stroke="#383838" stroke-width="1.01"/><path d="M634.9,518.7 A2.2,5.0 -29 0 1 630.1,510.0" fill="none" stroke="#383838" stroke-width="0.86" stroke-linejoin="round" /><path d="M638.4,516.8 A2.2,5.0 -29 0 1 633.5,508.1" fill="none" stroke="#383838" stroke-width="0.86" stroke-linejoin="round" /><path d="M641.8,514.9 A2.2,5.0 -29 0 1 636.9,506.2" fill="none" stroke="#383838" stroke-width="0.86" stroke-linejoin="round" /><path d="M645.2,513.0 A2.2,5.0 -29 0 1 640.4,504.3" fill="none" stroke="#383838" stroke-width="0.86" stroke-linejoin="round" /><path d="M648.6,511.1 A2.2,5.0 -29 0 1 643.8,502.4" fill="none" stroke="#383838" stroke-width="0.86" stroke-linejoin="round" /><ellipse cx="629.5" cy="516" rx="4.5" ry="10.2" transform="rotate(-29.1 629.5 516)" fill="#fff" stroke="#383838" stroke-width="1.01"/><path d="M630.1,515.2 L631.1,522.9 L626.0,525.7 L619.9,520.8 L618.9,513.1 L624.0,510.3Z" fill="#fff" stroke="#383838" stroke-width="1.01" stroke-linejoin="round" /><path d="M631.1,522.9 L630.6,519.1 M624.0,510.3 L627.0,512.7" fill="none" stroke="#383838" stroke-width="0.81" stroke-linejoin="round" /><path d="M623.0,523.3 L619.4,516.9" fill="none" stroke="#383838" stroke-width="0.71" stroke-linejoin="round" /><line x1="651" y1="503.5" x2="665.5" y2="497.5" stroke="#555" stroke-width="1.01"/><ellipse cx="671" cy="493.5" rx="5.3" ry="7.3" transform="rotate(-20 671 493.5)" fill="none" stroke="#383838" stroke-width="1.12"/><ellipse cx="671" cy="493.5" rx="3.6" ry="5.5" transform="rotate(-20 671 493.5)" fill="none" stroke="#383838" stroke-width="0.9"/><line x1="632.8" y1="86" x2="632.8" y2="107" stroke="#555" stroke-width="1.12"/><line x1="736" y1="94.3" x2="757.5" y2="94.3" stroke="#555" stroke-width="1.12"/><line x1="723" y1="183.2" x2="743.5" y2="183.2" stroke="#555" stroke-width="1.12"/><line x1="504" y1="197.3" x2="525" y2="197.3" stroke="#555" stroke-width="1.12"/><line x1="488" y1="227.7" x2="509.5" y2="227.7" stroke="#555" stroke-width="1.12"/><line x1="548.6" y1="245.5" x2="548.6" y2="268.5" stroke="#555" stroke-width="1.12"/><line x1="511.8" y1="268.5" x2="511.8" y2="289.5" stroke="#555" stroke-width="1.12"/><line x1="564" y1="297.5" x2="564" y2="320" stroke="#555" stroke-width="1.12"/><line x1="529" y1="324.8" x2="550" y2="324.8" stroke="#555" stroke-width="1.12"/><line x1="575.6" y1="345" x2="575.6" y2="370" stroke="#555" stroke-width="1.12"/><line x1="688.8" y1="224" x2="688.8" y2="246" stroke="#555" stroke-width="1.12"/><line x1="648.4" y1="233.5" x2="648.4" y2="254.5" stroke="#555" stroke-width="1.12"/><line x1="627.3" y1="339" x2="627.3" y2="362" stroke="#555" stroke-width="1.12"/><line x1="745.6" y1="347" x2="745.6" y2="369.5" stroke="#555" stroke-width="1.12"/><line x1="618.3" y1="385" x2="618.3" y2="405.5" stroke="#555" stroke-width="1.12"/><line x1="533" y1="382.5" x2="533" y2="403" stroke="#555" stroke-width="1.12"/><line x1="492.6" y1="414.5" x2="492.6" y2="435.8" stroke="#555" stroke-width="1.12"/><line x1="583.1" y1="409" x2="583.1" y2="432" stroke="#555" stroke-width="1.12"/><line x1="647.7" y1="444" x2="647.7" y2="463.5" stroke="#555" stroke-width="1.12"/><line x1="492.7" y1="470" x2="492.7" y2="490" stroke="#555" stroke-width="1.12"/><line x1="575.7" y1="501" x2="575.7" y2="519" stroke="#555" stroke-width="1.12"/><line x1="672.4" y1="501" x2="672.4" y2="523.5" stroke="#555" stroke-width="1.12"/><line x1="629.8" y1="526.5" x2="629.8" y2="548.3" stroke="#555" stroke-width="1.12"/><text x="618.3" y="84.0" class="lb">49065</text><text x="707.3" y="97.0" class="lb">16115</text><text x="692.8" y="185.5" class="lb">52005</text><text x="474.7" y="200.0" class="lb">92055</text><text x="470.0" y="231.0" class="lb">670</text><text x="533.9" y="244.0" class="lb">92144</text><text x="503.2" y="266.3" class="lb">600</text><text x="550.5" y="295.6" class="lb">92042</text><text x="498.9" y="328.2" class="lb">92042</text><text x="562.3" y="378.3" class="lb">13107</text><text x="674.3" y="221.0" class="lb">59051</text><text x="640.0" y="231.6" class="lb">130</text><text x="613.5" y="371.0" class="lb">14024</text><text x="731.6" y="345.3" class="lb">13045</text><text x="607.2" y="383.3" class="lb">130A</text><text x="518.5" y="412.4" class="lb">16154</text><text x="575.3" y="407.3" class="lb">214</text><text x="475.4" y="445.4" class="lb">16154A</text><text x="633.3" y="472.5" class="lb">92143</text><text x="475.3" y="468.4" class="lb">49065A</text><text x="561.2" y="527.5" class="lb">13183</text><text x="658.0" y="532.2" class="lb">11009</text><text x="615.3" y="556.6" class="lb">92066</text></svg>

<div class="abs row" style="top:661px;background:#fff"></div>
<div class="abs row" style="top:679px;background:#6c9cd8;border-top:1px solid #6490c8;border-bottom:1px solid #5f8ac2"></div>
<div class="abs row" style="top:697px;background:#fff"></div>
<div class="abs row" style="top:715px;background:#e8e6e3"></div>
<svg class="abs" style="left:77px;top:662px" width="16" height="17" viewBox="0 0 16 17"><rect x="1" y="2" width="13.6" height="13.5" fill="#fff"/><path d="M1,15.5 L14.6,15.5 M14.6,2.5 L14.6,15.5" stroke="#000" stroke-width="1"/><path d="M1,2.5 L1,15" stroke="#555" stroke-width="0.6"/><g fill="#000"><rect x="2" y="0" width="1" height="1"/><rect x="4" y="0" width="1" height="1"/><rect x="6" y="0" width="1" height="1"/><rect x="8" y="0" width="1" height="1"/><rect x="10" y="0" width="1" height="1"/><rect x="12" y="0" width="1" height="1"/><rect x="1" y="1" width="1" height="1"/><rect x="3" y="2" width="1" height="1"/><rect x="5" y="2" width="1" height="1"/><rect x="7" y="2" width="1" height="1"/><rect x="9" y="2" width="1" height="1"/><rect x="11" y="2" width="1" height="1"/><rect x="13" y="1" width="1" height="1"/></g><path d="M3,5.3 L5.6,5.3 M7,5.3 L8.5,5.3 M3,7.5 L6.7,7.5 M8,9.3 L10,9.3" stroke="#000" stroke-width="1"/><rect x="9.8" y="11" width="1" height="1" fill="#000"/><path d="M2.3,9.6 L5.2,12.6 L12.6,4.4" fill="none" stroke="#0000a0" stroke-width="2.1"/></svg>
<div class="abs" style="left:36px;top:674px;width:2px;height:2px;background:#000"></div>
<svg class="abs" style="left:77px;top:680px" width="16" height="17" viewBox="0 0 16 17"><rect x="1" y="2" width="13.6" height="13.5" fill="#fff"/><path d="M1,15.5 L14.6,15.5 M14.6,2.5 L14.6,15.5" stroke="#000" stroke-width="1"/><path d="M1,2.5 L1,15" stroke="#555" stroke-width="0.6"/><g fill="#000"><rect x="2" y="0" width="1" height="1"/><rect x="4" y="0" width="1" height="1"/><rect x="6" y="0" width="1" height="1"/><rect x="8" y="0" width="1" height="1"/><rect x="10" y="0" width="1" height="1"/><rect x="12" y="0" width="1" height="1"/><rect x="1" y="1" width="1" height="1"/><rect x="3" y="2" width="1" height="1"/><rect x="5" y="2" width="1" height="1"/><rect x="7" y="2" width="1" height="1"/><rect x="9" y="2" width="1" height="1"/><rect x="11" y="2" width="1" height="1"/><rect x="13" y="1" width="1" height="1"/></g><path d="M3,5.3 L5.6,5.3 M7,5.3 L8.5,5.3 M3,7.5 L6.7,7.5 M8,9.3 L10,9.3" stroke="#000" stroke-width="1"/><rect x="9.8" y="11" width="1" height="1" fill="#000"/><path d="M2.3,9.6 L5.2,12.6 L12.6,4.4" fill="none" stroke="#0000a0" stroke-width="2.1"/></svg>
<div class="td" style="left:110px;width:100px;text-align:center;top:682px">49065A</div>
<div class="td" style="left:238px;width:100px;text-align:center;top:682px">49065-2072</div>
<div class="td" style="left:384px;width:200px;text-align:center;top:682px">FILTER-OIL(SCRN)</div>
<div class="td" style="left:629px;width:100px;text-align:center;top:682px">1</div>
<svg class="abs" style="left:77px;top:698px" width="16" height="17" viewBox="0 0 16 17"><rect x="1" y="2" width="13.6" height="13.5" fill="#fff"/><path d="M1,15.5 L14.6,15.5 M14.6,2.5 L14.6,15.5" stroke="#000" stroke-width="1"/><path d="M1,2.5 L1,15" stroke="#555" stroke-width="0.6"/><g fill="#000"><rect x="2" y="0" width="1" height="1"/><rect x="4" y="0" width="1" height="1"/><rect x="6" y="0" width="1" height="1"/><rect x="8" y="0" width="1" height="1"/><rect x="10" y="0" width="1" height="1"/><rect x="12" y="0" width="1" height="1"/><rect x="1" y="1" width="1" height="1"/><rect x="3" y="2" width="1" height="1"/><rect x="5" y="2" width="1" height="1"/><rect x="7" y="2" width="1" height="1"/><rect x="9" y="2" width="1" height="1"/><rect x="11" y="2" width="1" height="1"/><rect x="13" y="1" width="1" height="1"/></g><path d="M3,5.3 L5.6,5.3 M7,5.3 L8.5,5.3 M3,7.5 L6.7,7.5 M8,9.3 L10,9.3" stroke="#000" stroke-width="1"/><rect x="9.8" y="11" width="1" height="1" fill="#000"/><path d="M2.3,9.6 L5.2,12.6 L12.6,4.4" fill="none" stroke="#0000a0" stroke-width="2.1"/></svg>
<svg class="abs" style="left:22px;top:697px" width="18" height="18" viewBox="0 0 18 18"><path d="M6,1 L1.8,5.3 L7,8.6 Z" fill="#000"/><path d="M5,4.8 Q13,4 15.8,14.8" fill="none" stroke="#000" stroke-width="2.4"/></svg>
<div class="td" style="left:110px;width:100px;text-align:center;top:700px">52005</div>
<div class="td" style="left:238px;width:100px;text-align:center;top:700px">52005-2120</div>
<div class="td" style="left:384px;width:200px;text-align:center;top:700px">GAUGE</div>
<div class="td" style="left:629px;width:100px;text-align:center;top:700px">1</div>
<svg class="abs" style="left:77px;top:716px" width="16" height="17" viewBox="0 0 16 17"><rect x="1" y="2" width="13.6" height="13.5" fill="#fff"/><path d="M1,15.5 L14.6,15.5 M14.6,2.5 L14.6,15.5" stroke="#000" stroke-width="1"/><path d="M1,2.5 L1,15" stroke="#555" stroke-width="0.6"/><g fill="#000"><rect x="2" y="0" width="1" height="1"/><rect x="4" y="0" width="1" height="1"/><rect x="6" y="0" width="1" height="1"/><rect x="8" y="0" width="1" height="1"/><rect x="10" y="0" width="1" height="1"/><rect x="12" y="0" width="1" height="1"/><rect x="1" y="1" width="1" height="1"/><rect x="3" y="2" width="1" height="1"/><rect x="5" y="2" width="1" height="1"/><rect x="7" y="2" width="1" height="1"/><rect x="9" y="2" width="1" height="1"/><rect x="11" y="2" width="1" height="1"/><rect x="13" y="1" width="1" height="1"/></g><path d="M3,5.3 L5.6,5.3 M7,5.3 L8.5,5.3 M3,7.5 L6.7,7.5 M8,9.3 L10,9.3" stroke="#000" stroke-width="1"/><rect x="9.8" y="11" width="1" height="1" fill="#000"/><path d="M2.3,9.6 L5.2,12.6 L12.6,4.4" fill="none" stroke="#0000a0" stroke-width="2.1"/></svg>
<svg class="abs" style="left:22px;top:715px" width="18" height="18" viewBox="0 0 18 18"><path d="M6,1 L1.8,5.3 L7,8.6 Z" fill="#000"/><path d="M5,4.8 Q13,4 15.8,14.8" fill="none" stroke="#000" stroke-width="2.4"/></svg>
<div class="td" style="left:110px;width:100px;text-align:center;top:718px">59051</div>
<div class="td" style="left:238px;width:100px;text-align:center;top:718px">59051-2114</div>
<div class="td" style="left:384px;width:200px;text-align:center;top:718px">GEAR-SPUR</div>
<div class="td" style="left:629px;width:100px;text-align:center;top:718px">1</div>
<div class="abs" id="thead"><div class="l1"></div><div class="l2"></div></div>
<svg class="abs" style="left:85px;top:653px" width="9" height="13" viewBox="0 0 9 13"><path d="M4.5,1.3 L8.6,5.9 L0.4,5.9 Z M0.4,7.2 L8.6,7.2 L4.5,11.6 Z" fill="#fff" stroke="#222" stroke-width="0.6"/></svg>
<svg class="abs" style="left:203px;top:653px" width="9" height="13" viewBox="0 0 9 13"><path d="M4.5,1.3 L8.6,5.9 L0.4,5.9 Z M0.4,7.2 L8.6,7.2 L4.5,11.6 Z" fill="#fff" stroke="#222" stroke-width="0.6"/></svg>
<svg class="abs" style="left:340px;top:653px" width="9" height="13" viewBox="0 0 9 13"><path d="M4.5,1.3 L8.6,5.9 L0.4,5.9 Z M0.4,7.2 L8.6,7.2 L4.5,11.6 Z" fill="#fff" stroke="#222" stroke-width="0.6"/></svg>
<svg class="abs" style="left:595px;top:653px" width="9" height="13" viewBox="0 0 9 13"><path d="M4.5,1.3 L8.6,5.9 L0.4,5.9 Z M0.4,7.2 L8.6,7.2 L4.5,11.6 Z" fill="#fff" stroke="#222" stroke-width="0.6"/></svg>
<svg class="abs" style="left:731px;top:653px" width="9" height="13" viewBox="0 0 9 13"><path d="M4.5,1.3 L8.6,5.9 L0.4,5.9 Z M0.4,7.2 L8.6,7.2 L4.5,11.6 Z" fill="#fff" stroke="#222" stroke-width="0.6"/></svg>
<svg class="abs" style="left:980px;top:653px" width="9" height="13" viewBox="0 0 9 13"><path d="M4.5,1.3 L8.6,5.9 L0.4,5.9 Z M0.4,7.2 L8.6,7.2 L4.5,11.6 Z" fill="#fff" stroke="#222" stroke-width="0.6"/></svg>
<div class="th" style="left:138px">Ref #</div>
<div class="th" style="left:264px">Part #</div>
<div class="th" style="left:453px">Description</div>
<div class="th" style="left:669px">Qty</div>
<div class="th" style="left:837px">Context Note</div>
<div class="th" style="left:1075px">Foot Note</div>
<svg class="abs" style="left:440px;top:651px" width="12" height="12" viewBox="0 0 12 12"><rect x="0" y="0" width="12" height="12" rx="1.5" fill="#1e74e6"/><path d="M2.6,6.3 L5,8.7 L9.6,3" fill="none" stroke="#fff" stroke-width="1.8"/></svg>
<svg class="abs" style="left:656px;top:651px" width="12" height="12" viewBox="0 0 12 12"><rect x="0" y="0" width="12" height="12" rx="1.5" fill="#1e74e6"/><path d="M2.6,6.3 L5,8.7 L9.6,3" fill="none" stroke="#fff" stroke-width="1.8"/></svg>
<svg class="abs" style="left:824px;top:651px" width="12" height="12" viewBox="0 0 12 12"><rect x="0" y="0" width="12" height="12" rx="1.5" fill="#1e74e6"/><path d="M2.6,6.3 L5,8.7 L9.6,3" fill="none" stroke="#fff" stroke-width="1.8"/></svg>
<svg class="abs" style="left:1062px;top:651px" width="12" height="12" viewBox="0 0 12 12"><rect x="0" y="0" width="12" height="12" rx="1.5" fill="#1e74e6"/><path d="M2.6,6.3 L5,8.7 L9.6,3" fill="none" stroke="#fff" stroke-width="1.8"/></svg>
<div class="abs" id="topbar"></div>
<div class="abs" id="lborder"></div>
<div class="abs" id="bottom"></div>
</body></html>
